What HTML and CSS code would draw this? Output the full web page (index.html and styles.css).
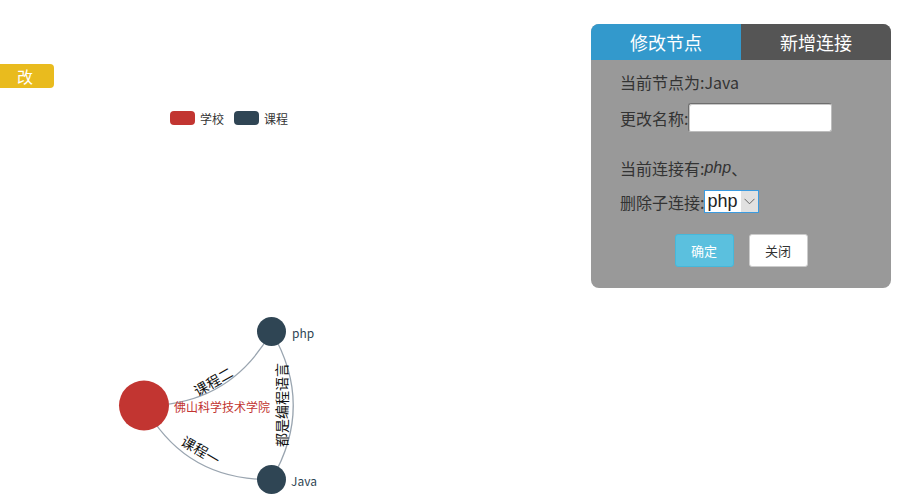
FILE: index.html
```html
<!DOCTYPE html>
<html lang="zh-CN">
<head>
<meta charset="utf-8">
<title>关系图</title>
<link rel="stylesheet" href="styles.css">
</head>
<body>
<div class="stage">
  <svg class="chart" width="902" height="504" viewBox="0 0 902 504" xmlns="http://www.w3.org/2000/svg">
    <g class="legend">
      <rect x="170" y="111" width="25" height="14" rx="4" fill="#c23531"/>
      <text x="200" y="118.5" class="legend-text">学校</text>
      <rect x="234" y="111" width="25" height="14" rx="4" fill="#2f4554"/>
      <text x="264" y="118.5" class="legend-text">课程</text>
    </g>
    <g class="edges" fill="none" stroke="#9aa5b0" stroke-width="1.3">
      <path d="M144 405.5 Q229.7 406 271.5 331.5"/>
      <path d="M144 405.5 Q185 480.6 271.5 479.5"/>
      <path d="M271.5 331.5 Q315 405.5 271.5 479.5"/>
    </g>
    <g class="edge-labels">
      <text transform="translate(213 381) rotate(-30)" class="edge-text">课程二</text>
      <text transform="translate(201 450) rotate(30.5)" class="edge-text">课程一</text>
      <text transform="translate(281 405) rotate(-90)" class="edge-text">都是编程语言</text>
    </g>
    <g class="nodes">
      <circle cx="144" cy="405.5" r="25" fill="#c23531"/>
      <circle cx="271.5" cy="331.5" r="14.5" fill="#2f4554"/>
      <circle cx="271.5" cy="479.5" r="14.5" fill="#2f4554"/>
    </g>
    <g class="node-labels">
      <text x="174" y="406" class="node-text school">佛山科学技术学院</text>
      <text x="292" y="332.5" class="node-text">php</text>
      <text x="291" y="480.5" class="node-text">Java</text>
    </g>
  </svg>

  <button class="edit-btn" type="button">改</button>

  <div class="panel">
    <div class="tabs">
      <div class="tab tab-active">修改节点</div>
      <div class="tab tab-other">新增连接</div>
    </div>
    <div class="panel-body">
      <div class="row row-current">当前节点为:Java</div>
      <div class="row row-name">更改名称:<input class="name-input" type="text"></div>
      <div class="row row-links">当前连接有:<em>php</em>、</div>
      <div class="row row-delete">删除子连接:<span class="select-box"><span class="select-value">php</span><span class="select-arrow"><svg width="11" height="7" viewBox="0 0 11 7"><path d="M0.5 0.8 L5.5 5.8 L10.5 0.8" fill="none" stroke="#666" stroke-width="1"/></svg></span></span></div>
      <div class="actions">
        <button class="btn btn-info" type="button">确定</button>
        <button class="btn btn-default" type="button">关闭</button>
      </div>
    </div>
  </div>
</div>
</body>
</html>
```

FILE: styles.css
```css
html, body {
  margin: 0;
  padding: 0;
  background: #ffffff;
}

body {
  font-family: "Noto Sans CJK SC", "Noto Sans", sans-serif;
  color: #333;
}

.stage {
  position: relative;
  width: 902px;
  height: 504px;
  overflow: hidden;
}

.chart {
  display: block;
}

.legend-text {
  font-size: 12px;
  fill: #333;
  dominant-baseline: central;
}

.edge-text {
  font-size: 14px;
  fill: #111;
  text-anchor: middle;
  dominant-baseline: central;
}

.node-text {
  font-size: 12px;
  fill: #2f4554;
  dominant-baseline: central;
}

.node-text.school {
  fill: #c23531;
}

.edit-btn {
  position: absolute;
  left: -4px;
  top: 64px;
  width: 58px;
  height: 24px;
  padding: 0;
  border: none;
  border-radius: 4px;
  background: #e9bb1e;
  color: #fff;
  font-family: "Noto Sans CJK SC", sans-serif;
  font-size: 16px;
  line-height: 24px;
}

.panel {
  position: absolute;
  left: 591px;
  top: 24px;
  width: 300px;
  height: 264px;
  background: #999999;
  border-radius: 8px;
  overflow: hidden;
}

.tabs {
  display: flex;
  height: 36px;
}

.tab {
  flex: 1;
  display: flex;
  align-items: center;
  justify-content: center;
  color: #fff;
  font-size: 18px;
}

.tab-active {
  background: #3399cc;
}

.tab-other {
  background: #555555;
}

.panel-body {
  display: flex;
  flex-direction: column;
  padding: 10px 0 0 29px;
  font-size: 16px;
  color: #333;
}

.row {
  display: flex;
  align-items: center;
  height: 24px;
  white-space: nowrap;
}

.row-name {
  margin-top: 9px;
  height: 29px;
}

.row-links {
  margin-top: 24px;
}

.row-links em {
  font-family: "Liberation Sans", sans-serif;
  font-style: italic;
}

.row-delete {
  margin-top: 10px;
  height: 23px;
}

.name-input {
  box-sizing: border-box;
  width: 144px;
  height: 29px;
  margin: 0;
  border: 1px solid #6e6e6e;
  border-right-color: #bdbdbd;
  border-bottom-color: #bdbdbd;
  border-radius: 3px;
  background: #fff;
  box-shadow: inset 1px 1px 0 #c9c9c9;
}

.select-box {
  box-sizing: border-box;
  display: flex;
  align-items: stretch;
  width: 55px;
  height: 23px;
  border: 1px solid #3b9be0;
  background: #fff;
}

.select-value {
  flex: 1;
  padding-left: 2px;
  font-family: "Liberation Sans", sans-serif;
  font-size: 18px;
  line-height: 21px;
  color: #222;
}

.select-arrow {
  width: 17px;
  display: flex;
  align-items: center;
  justify-content: center;
  background: #e1e1e1;
}

.actions {
  display: flex;
  justify-content: center;
  gap: 15px;
  margin-top: 21px;
  margin-left: -29px;
}

.btn {
  box-sizing: border-box;
  width: 59px;
  height: 33px;
  padding: 0;
  border-radius: 3px;
  font-family: "Noto Sans CJK SC", sans-serif;
  font-size: 13px;
}

.btn-info {
  background: #5bc0de;
  border: 1px solid #46b8da;
  color: #fff;
}

.btn-default {
  background: #fff;
  border: 1px solid #cccccc;
  color: #333;
}
```
